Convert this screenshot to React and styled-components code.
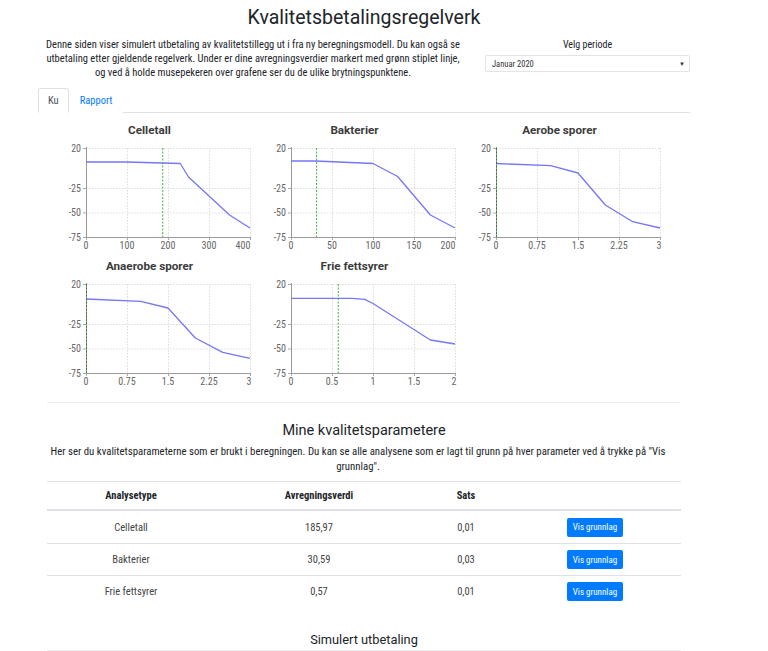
import React from "react";
import styled, { createGlobalStyle } from "styled-components";

const FONT = `"Roboto", "Open Sans", "Noto Sans", sans-serif`;

const GlobalStyle = createGlobalStyle`
  html, body { margin: 0; padding: 0; background: #fff; }
  body {
    font-family: ${FONT};
    font-stretch: condensed;
    color: #212529;
  }
  * { box-sizing: border-box; }
`;

const Page = styled.main`
  width: 652px;
  margin-left: 38px;
  padding-top: 5px;
`;

const Title = styled.h1`
  margin: 0;
  text-align: center;
  font-size: 19.5px;
  font-weight: 400;
  font-stretch: normal;
  line-height: 26px;
`;

const Intro = styled.section`
  display: grid;
  grid-template-columns: 430px 205px;
  column-gap: 17px;
  margin-top: 7px;
`;

const Description = styled.p`
  margin: 0;
  text-align: center;
  font-size: 10.5px;
  line-height: 14px;
  white-space: nowrap;
`;

const Period = styled.div`
  display: flex;
  flex-direction: column;
`;

const PeriodLabel = styled.label`
  text-align: center;
  font-size: 10px;
  line-height: 14px;
`;

const Select = styled.div`
  margin-top: 3px;
  height: 17px;
  border: 1px solid #e4e4e4;
  border-radius: 2px;
  display: flex;
  align-items: center;
  justify-content: space-between;
  padding: 0 4px 0 6px;
  font-size: 8.5px;
  color: #333;
  box-shadow: 0 0 1px rgba(0, 0, 0, 0.05);
`;

const Caret = styled.span`
  font-size: 6px;
  color: #333;
`;

const Tabs = styled.nav`
  display: flex;
  margin-top: 8px;
  height: 25px;
  border-bottom: 1px solid #dee2e6;
`;

const Tab = styled.a`
  display: block;
  height: 25px;
  line-height: 23px;
  padding: 0 ${(p) => (p.$active ? "9px" : "10px")};
  font-size: 10.5px;
  border: 1px solid ${(p) => (p.$active ? "#dee2e6" : "transparent")};
  border-bottom-color: ${(p) => (p.$active ? "#fff" : "transparent")};
  border-radius: 3px 3px 0 0;
  background: #fff;
  color: ${(p) => (p.$active ? "#495057" : "#007bff")};
  text-decoration: none;
  cursor: pointer;
`;

const Charts = styled.section`
  display: grid;
  grid-template-columns: repeat(3, 205px);
  margin-left: 9px;
  padding-top: 7px;
`;

const ChartBlock = styled.div`
  display: flex;
  flex-direction: column;
  height: 136px;
  padding-top: 2px;
`;

const ChartTitle = styled.div`
  height: 16px;
  line-height: 16px;
  text-align: center;
  font-size: 11.7px;
  font-weight: 700;
  font-stretch: normal;
  color: #3c3c3c;
`;

const ChartSvg = styled.svg`
  display: block;
  margin-top: 2px;
  overflow: visible;
  font-family: ${FONT};
  font-stretch: condensed;
`;

const Divider = styled.hr`
  margin: 10px 0 0 9px;
  width: 634px;
  border: 0;
  border-top: 1px solid #eeeeee;
`;

const SectionTitle = styled.h2`
  margin: ${(p) => p.$mt || "18px"} 0 0;
  text-align: center;
  font-size: ${(p) => p.$size || "14.5px"};
  font-weight: 400;
  font-stretch: normal;
  line-height: 20px;
`;

const SectionText = styled.p`
  margin: 3px 0 0;
  padding-right: 12px;
  text-align: center;
  font-size: 10.8px;
  line-height: 15px;
  white-space: nowrap;
`;

const Table = styled.div`
  margin: 7px 0 0 9px;
  width: 634px;
  font-size: 10.5px;
`;

const Row = styled.div`
  display: grid;
  grid-template-columns: 168px 208px 86px 1fr;
  align-items: center;
  justify-items: center;
  height: ${(p) => (p.$head ? "30px" : "32px")};
  border-top: ${(p) => (p.$first ? "none" : "1px solid #dee2e6")};
  border-bottom: ${(p) => (p.$head ? "2px solid #dee2e6" : "none")};
  font-weight: ${(p) => (p.$head ? 700 : 400)};
  color: ${(p) => (p.$head ? "#212529" : "#444")};
`;

const Button = styled.button`
  width: 56px;
  height: 19px;
  padding: 0;
  border: none;
  border-radius: 2px;
  background: #007bff;
  color: #fff;
  font-family: inherit;
  font-stretch: condensed;
  font-size: 9px;
  cursor: pointer;
`;

const TableTop = styled.div`
  margin: 0 0 0 9px;
  width: 634px;
  border-top: 1px solid #eeeeee;
`;

const PW = 164;
const PH = 89;
const OX = 39;
const OY = 8;
const Y_TICKS = [
  ["20", 0],
  ["-25", 40],
  ["-50", 64.5],
  ["-75", 89],
];

function Chart({ title, xTicks, xMax, points, marker }) {
  const sx = (v) => OX + (v / xMax) * PW;
  const path = points.map(([x, y], i) => `${i ? "L" : "M"}${sx(x).toFixed(1)} ${(OY + y).toFixed(1)}`).join(" ");
  const mx = sx(marker);
  return (
    <ChartBlock>
      <ChartTitle>{title}</ChartTitle>
      <ChartSvg width="205" height="112" viewBox="0 0 205 112">
        {Y_TICKS.map(([l, y]) => (
          <g key={l}>
            <line x1={OX} x2={OX + PW} y1={OY + y + 0.5} y2={OY + y + 0.5} stroke="#dcdcdc" strokeWidth="1" strokeDasharray="1.5 1.5" />
            <line x1={OX - 3} x2={OX} y1={OY + y + 0.5} y2={OY + y + 0.5} stroke="#aaa" strokeWidth="1" />
            <text x={OX - 5} y={OY + y + 3.5} textAnchor="end" fontSize="10" fill="#666">
              {l}
            </text>
          </g>
        ))}
        {xTicks.map((l, i) => {
          const x = OX + (i / (xTicks.length - 1)) * PW;
          const half = l.length * 3;
          const tx = Math.min(x, OX + PW + 2 - half);
          return (
            <g key={l}>
              <line x1={x + 0.5} x2={x + 0.5} y1={OY} y2={OY + PH} stroke="#dcdcdc" strokeWidth="1" strokeDasharray="1.5 1.5" />
              <line x1={x + 0.5} x2={x + 0.5} y1={OY + PH} y2={OY + PH + 3} stroke="#aaa" strokeWidth="1" />
              <text x={tx} y={OY + PH + 12} textAnchor="middle" fontSize="10" fill="#666">
                {l}
              </text>
            </g>
          );
        })}
        <line x1={OX + 0.5} x2={OX + 0.5} y1={OY - 1} y2={OY + PH + 1} stroke="#9a9a9a" strokeWidth="1" />
        <line x1={OX} x2={OX + PW + 1} y1={OY + PH + 0.5} y2={OY + PH + 0.5} stroke="#9a9a9a" strokeWidth="1" />
        <path d={path} fill="none" stroke="#7676f7" strokeWidth="1.3" strokeLinejoin="round" />
        <line x1={mx + 0.5} x2={mx + 0.5} y1={OY} y2={OY + PH} stroke={marker === 0 ? "#2e7d32" : "#3bb33b"} strokeWidth="1" strokeDasharray="2 1.5" />
      </ChartSvg>
    </ChartBlock>
  );
}

const CHARTS = [
  {
    title: "Celletall",
    xTicks: ["0", "100", "200", "300", "400"],
    xMax: 400,
    points: [[0, 14], [100, 14], [230, 15.5], [250, 29], [350, 67], [400, 80]],
    marker: 185.97,
  },
  {
    title: "Bakterier",
    xTicks: ["0", "50", "100", "150", "200"],
    xMax: 200,
    points: [[0, 13], [30, 13], [100, 15.5], [130, 28.5], [170, 67], [200, 80]],
    marker: 30.59,
  },
  {
    title: "Aerobe sporer",
    xTicks: ["0", "0.75", "1.5", "2.25", "3"],
    xMax: 3,
    points: [[0, 15.5], [1, 17.7], [1.5, 25], [2, 57], [2.5, 73.7], [3, 80]],
    marker: 0,
  },
  {
    title: "Anaerobe sporer",
    xTicks: ["0", "0.75", "1.5", "2.25", "3"],
    xMax: 3,
    points: [[0, 15], [1, 17.3], [1.5, 24], [2, 54], [2.5, 68.3], [3, 74.3]],
    marker: 0,
  },
  {
    title: "Frie fettsyrer",
    xTicks: ["0", "0.5", "1", "1.5", "2"],
    xMax: 2,
    points: [[0, 14.3], [0.75, 14.3], [0.9, 15.3], [1, 19.5], [1.7, 56], [2, 60]],
    marker: 0.57,
  },
];

const PARAMS = [
  ["Celletall", "185,97", "0,01"],
  ["Bakterier", "30,59", "0,03"],
  ["Frie fettsyrer", "0,57", "0,01"],
];

export default function App() {
  return (
    <>
      <GlobalStyle />
      <Page>
        <Title>Kvalitetsbetalingsregelverk</Title>
        <Intro>
          <Description>
            Denne siden viser simulert utbetaling av kvalitetstillegg ut i fra ny beregningsmodell. Du kan også se
            <br />
            utbetaling etter gjeldende regelverk. Under er dine avregningsverdier markert med grønn stiplet linje,
            <br />
            og ved å holde musepekeren over grafene ser du de ulike brytningspunktene.
          </Description>
          <Period>
            <PeriodLabel>Velg periode</PeriodLabel>
            <Select>
              <span>Januar 2020</span>
              <Caret>▼</Caret>
            </Select>
          </Period>
        </Intro>
        <Tabs>
          <Tab $active>Ku</Tab>
          <Tab>Rapport</Tab>
        </Tabs>
        <Charts>
          {CHARTS.map((c) => (
            <Chart key={c.title} {...c} />
          ))}
        </Charts>
        <Divider />
        <SectionTitle>Mine kvalitetsparametere</SectionTitle>
        <SectionText>
          Her ser du kvalitetsparameterne som er brukt i beregningen. Du kan se alle analysene som er lagt til grunn på hver parameter ved å trykke på "Vis
          <br />
          grunnlag".
        </SectionText>
        <Table>
          <Row $head>
            <span>Analysetype</span>
            <span>Avregningsverdi</span>
            <span>Sats</span>
            <span />
          </Row>
          {PARAMS.map(([name, val, sats], i) => (
            <Row key={name} $first={i === 0}>
              <span>{name}</span>
              <span>{val}</span>
              <span>{sats}</span>
              <Button>Vis grunnlag</Button>
            </Row>
          ))}
        </Table>
        <SectionTitle $mt="23px" $size="12.8px">
          Simulert utbetaling
        </SectionTitle>
        <TableTop />
      </Page>
    </>
  );
}
